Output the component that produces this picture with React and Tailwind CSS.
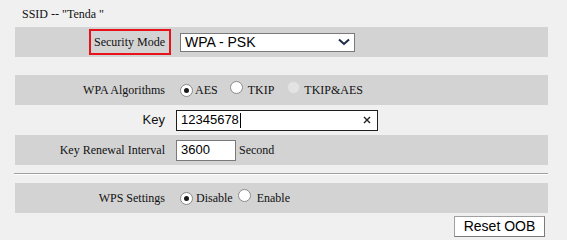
import React from 'react';

const serif = { fontFamily: '"Liberation Serif", "Times New Roman", serif' };
const sans = { fontFamily: '"Liberation Sans", Arial, sans-serif' };

// ラジオボタン (描画のみ)
const Radio = ({ checked = false, disabled = false }) => (
  <span
    className={`inline-flex items-center justify-center w-[13px] h-[13px] rounded-full border ${
      disabled ? 'bg-[#e3e3e3] border-[#d6d6d6]' : 'bg-white border-[#8a8a8a]'
    }`}
  >
    {checked && <span className="block w-[5px] h-[5px] rounded-full bg-[#1a1a1a]" />}
  </span>
);

const Row = ({ gray = true, children }) => (
  <div className={`ml-[15px] w-[533px] h-[30px] flex items-center ${gray ? 'bg-[#d3d3d3]' : ''}`}>
    {children}
  </div>
);

const Label = ({ children, font = serif, size = 'text-[12px]' }) => (
  <div className={`w-[157px] flex justify-end pr-[7px] ${size} text-[#111]`} style={font}>
    {children}
  </div>
);

export default function App() {
  return (
    <div className="w-[567px] h-[240px] bg-[#f0f0f0] flex flex-col overflow-hidden">
      {/* SSID */}
      <div className="h-[27px] flex items-center pl-[22px] text-[12px] text-[#111]" style={serif}>
        SSID -- "Tenda "
      </div>

      {/* セキュリティモード */}
      <Row>
        <div className="w-[157px] flex justify-end pr-[1px]">
          <div className="h-[26px] flex items-center border-2 border-[#e8121b] pl-[3px] pr-[4px] text-[12px] text-[#111]" style={serif}>
            Security Mode
          </div>
        </div>
        <div className="flex items-center pl-[8px]">
          <div className="w-[175px] h-[19px] bg-white border border-[#7a7a7a] flex items-center justify-between pl-[4px] pr-[4px] text-[14px] text-black" style={sans}>
            <span>WPA - PSK</span>
            <svg width="12" height="8" viewBox="0 0 12 8">
              <path d="M1 1.5 L6 6 L11 1.5" fill="none" stroke="#1b2a44" strokeWidth="2" />
            </svg>
          </div>
        </div>
      </Row>

      <div className="h-[18px]" />

      {/* WPA アルゴリズム */}
      <Row>
        <Label>WPA Algorithms</Label>
        <div className="flex items-center pl-[8px] text-[12px] text-[#111]" style={serif}>
          <Radio checked />
          <span className="ml-[2px]">AES</span>
          <span className="ml-[12px]"><Radio /></span>
          <span className="ml-[5px]">TKIP</span>
          <span className="ml-[13px]"><Radio disabled /></span>
          <span className="ml-[4px]">TKIP&amp;AES</span>
        </div>
      </Row>

      {/* キー */}
      <Row gray={false}>
        <Label font={sans} size="text-[13px]">Key</Label>
        <div className="flex items-center pl-[4px]">
          <div className="w-[202px] h-[21px] bg-white border border-[#1e1e1e] flex items-center justify-between pl-[4px] pr-[6px] text-[13px] text-black" style={sans}>
            <span className="flex items-center">
              12345678
              <span className="ml-[1px] inline-block w-px h-[15px] bg-black" />
            </span>
            <svg width="8" height="8" viewBox="0 0 8 8">
              <path d="M1 1 L7 7 M7 1 L1 7" stroke="#222" strokeWidth="1.4" />
            </svg>
          </div>
        </div>
      </Row>

      {/* キー更新間隔 */}
      <Row>
        <Label>Key Renewal Interval</Label>
        <div className="flex items-center pl-[4px]">
          <div className="w-[60px] h-[21px] bg-white border border-[#7a7a7a] flex items-center pl-[4px] text-[13px] text-black" style={sans}>
            3600
          </div>
          <span className="ml-[3px] text-[12px] text-[#111]" style={serif}>Second</span>
        </div>
      </Row>

      {/* 区切り線 */}
      <div className="mt-[8px] ml-[14px] w-[534px] border-t border-[#a0a0a0] border-b border-b-white h-[2px]" />

      {/* WPS */}
      <div className="mt-[8px]">
        <Row>
          <Label>WPS Settings</Label>
          <div className="flex items-center pl-[8px] text-[12px] text-[#111]" style={serif}>
            <Radio checked />
            <span className="ml-[3px]">Disable</span>
            <span className="ml-[5px]"><Radio /></span>
            <span className="ml-[6px]">Enable</span>
          </div>
        </Row>
      </div>

      <div className="mt-[3px] flex justify-end pr-[22px]">
        <div className="w-[91px] h-[21px] bg-white border border-[#a0a0a0] border-r-[#7a7a7a] border-b-[#7a7a7a] flex items-center justify-center text-[14px] text-black" style={sans}>
          Reset OOB
        </div>
      </div>
    </div>
  );
}
